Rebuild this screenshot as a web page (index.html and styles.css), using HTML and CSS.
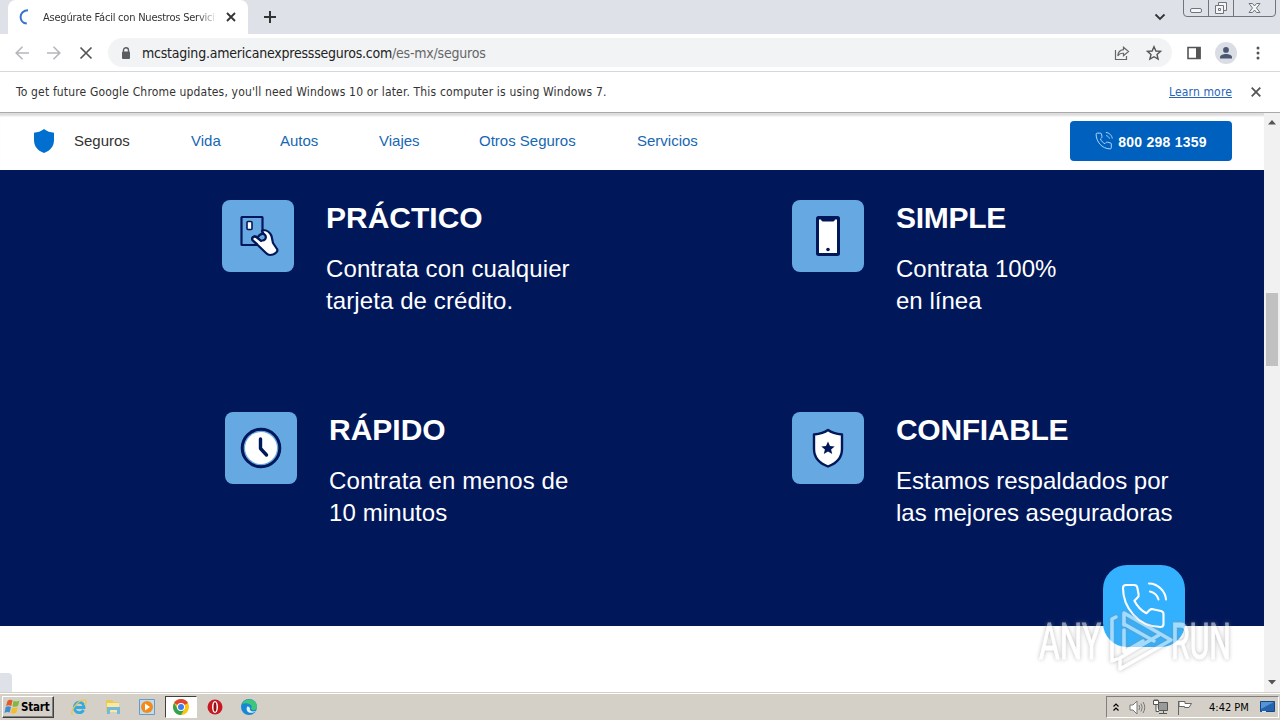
FILE: index.html
```html
<!DOCTYPE html>
<html lang="es">
    <head>
        <meta charset="UTF-8" />
        <meta name="viewport" content="width=device-width, initial-scale=1.0" />
        <title>Asegúrate Fácil con Nuestros Servicios</title>
        <link rel="stylesheet" href="styles.css">
    </head>
    <body>
        <div class="tabstrip">
            <div class="tab-edge"></div>
            <div class="tab">
                <svg class="spinner" width="16" height="16" viewBox="0 0 16 16"><path d="M9 1.2C4.5 1.2 1.6 4.2 1.6 8c0 3.6 2.6 6.2 6.2 6.6" fill="none" stroke="#3972cf" stroke-width="2" /></svg>
                <span class="tab-title">Asegúrate Fácil con Nuestros Servici</span>
                <svg width="10" height="10" viewBox="0 0 10 10"><path d="M1 1l8 8M9 1L1 9" stroke="#333" stroke-width="1.8" /></svg>
            </div>
            <svg class="new-tab" width="12" height="12" viewBox="0 0 12 12"><path d="M6 0v12M0 6h12" stroke="#333" stroke-width="2" /></svg>
            <svg class="tab-search" width="12" height="8" viewBox="0 0 12 8"><path d="M1.5 1.5L6 6l4.500-4.500" fill="none" stroke="#333" stroke-width="1.800" /></svg>
            <svg class="window-buttons" width="94" height="18" viewBox="0 0 94 18" fill="none" stroke="#70747b">
                <path d="M.5 0v13q0 3.500 3.500 3.500h85q3.500 0 3.500-3.500V0M25.500 0v16M50.500 0v16" />
                <rect x="7.500" y="8.500" width="11" height="4" rx="1.500" fill="#f5f5f7" />
                <path d="M35.500 5.500V2.500h8v8h-3" fill="#f5f5f7" />
                <path d="M32.500 5.500h8v8h-8zM35.500 8.500h2v2h-2z" fill="#f5f5f7" />
                <path d="M66 3.500h3.500l2 2.500 2-2.500H77l-3.500 4.500 3.500 4.500h-3.500l-2-2.500-2 2.500H66l3.500-4.500z" fill="#f5f5f7" />
            </svg>
        </div>

        <div class="toolbar">
            <svg width="14" height="14" viewBox="0 0 14 14"><path d="M14 7H1M7.500.8L1.200 7l6.300 6.200" fill="none" stroke="#b4b6b9" stroke-width="1.600" /></svg>
            <svg width="14" height="14" viewBox="0 0 14 14"><path d="M0 7h13M6.500.8L12.800 7l-6.300 6.200" fill="none" stroke="#b4b6b9" stroke-width="1.600" /></svg>
            <svg width="14" height="14" viewBox="0 0 14 14"><path d="M1.500 1.500l11 11M12.500 1.500l-11 11" stroke="#555" stroke-width="1.700" /></svg>
            <div class="address">
                <svg class="lock" width="10" height="12" viewBox="0 0 10 12"><path d="M2.500 5V3.200a2.500 2.500 0 015 0V5" fill="none" stroke="#5a5d61" stroke-width="1.400" /><rect x="1" y="4.500" width="8" height="7.500" rx="1" fill="#5a5d61" /></svg>
                <span class="url">mcstaging.americanexpressseguros.com<span class="path">/es-mx/seguros</span></span>
                <svg class="share" width="16" height="16" viewBox="0 0 16 16" fill="none" stroke="#666" stroke-width="1.200"><path d="M1.500 5v9.500h11V11" /><path d="M9.500 2.200L14.500 6.500l-5 4.300V8.300C7 8 5 9 3.800 11 4 7.300 6.200 5 9.500 4.700z" /></svg>
                <svg width="16" height="16" viewBox="0 0 16 16"><path d="M8 1.700l1.900 4.300 4.700.4-3.600 3.100 1.100 4.600L8 11.700l-4.100 2.400L5 9.500 1.400 6.400 6.100 6z" fill="none" stroke="#555" stroke-width="1.400" /></svg>
            </div>
            <svg class="panel" width="14" height="14" viewBox="0 0 14 14"><path d="M1 1.500h12v11H1z" fill="#fff" stroke="#555" stroke-width="1.600" /><path d="M9 1h4.500v12H9z" fill="#555" /></svg>
            <svg class="avatar" width="22" height="22" viewBox="0 0 22 22"><circle cx="11" cy="11" r="11" fill="#dadde3" /><circle cx="11" cy="7.900" r="2.900" fill="#4b5672" /><path d="M5 16.500v-1.300c0-2.200 3.500-3.200 6-3.200s6 1 6 3.200v1.300z" fill="#4b5672" /></svg>
            <svg width="4" height="14" viewBox="0 0 4 14" fill="#555"><circle cx="2" cy="2" r="1.500" /><circle cx="2" cy="7" r="1.500" /><circle cx="2" cy="12" r="1.500" /></svg>
        </div>

        <div class="infobar">
            <p>To get future Google Chrome updates, you'll need Windows 10 or later. This computer is using Windows 7.</p>
            <a href="#">Learn more</a>
            <svg width="10" height="10" viewBox="0 0 10 10"><path d="M.7.700l8.600 8.600M9.300.700L.7 9.300" stroke="#555" stroke-width="1.800" /></svg>
        </div>

        <div class="viewport">
            <div class="page">
                <header class="nav">
                    <svg class="brand" width="20" height="24" viewBox="0 0 20 24"><path d="M10 0c3 2.300 6.500 3.500 10 3.700V11c0 6.500-4 10.800-10 13C4 21.800 0 17.500 0 11V3.700C3.500 3.500 7 2.300 10 0z" fill="#006fcf" /></svg>
                    <a class="current" href="#">Seguros</a>
                    <a class="vida" href="#">Vida</a>
                    <a class="autos" href="#">Autos</a>
                    <a class="viajes" href="#">Viajes</a>
                    <a class="otros" href="#">Otros Seguros</a>
                    <a href="#">Servicios</a>
                    <button class="call" type="button">
                        <svg width="18" height="18" viewBox="0 0 48 48" fill="none" stroke="#b8dcff" stroke-width="2.500"><use href="#phone" /></svg>
                        <span>800 298 1359</span>
                    </button>
                </header>

                <section class="features">
                    <article class="feature">
                        <svg class="tile" width="72" height="72" viewBox="0 0 72 72" stroke="#00175a" stroke-width="2.200" stroke-linejoin="round" stroke-linecap="round">
                            <rect x="19.500" y="17" width="21" height="28" rx=".5" fill="#66a9e2" />
                            <rect x="25" y="21.500" width="5" height="8" rx="1" fill="#fff" stroke-width="1.600" />
                            <path d="M41 30c4 0 7 2.500 8.500 6l1.500 7 4 6c1.500 2-2 6-7 6-2 0-3-1-4-2L31 40.500c-2-2 0-5 3-4l5 3.200c3-.2 4-2.700 3-5.200L40 31z" fill="#fff" />
                            <path d="M36 37c1.500-2.500 3.500-3.500 5.500-3 3.500 1.500 3 6-1 6.500" fill="#66a9e2" />
                            <path d="M35 44l-4-3.500c-2-2 .5-5 3-3.500l5 4" fill="#fff" />
                        </svg>
                        <div>
                            <h2>PRÁCTICO</h2>
                            <p>Contrata con cualquier<br>tarjeta de crédito.</p>
                        </div>
                    </article>
                    <article class="feature">
                        <svg class="tile" width="72" height="72" viewBox="0 0 72 72">
                            <rect x="24" y="16" width="24" height="40" rx="2.500" fill="#00175a" />
                            <path d="M27 19.500h2c.3 1.200 1 2 2 2h10c1 0 1.700-.8 2-2h2v33.500H27z" fill="#fff" />
                            <circle cx="36" cy="49.500" r="1.800" fill="#00175a" />
                        </svg>
                        <div>
                            <h2 class="tight">SIMPLE</h2>
                            <p class="tight">Contrata 100%<br>en línea</p>
                        </div>
                    </article>
                    <article class="feature inset">
                        <svg class="tile" width="72" height="72" viewBox="0 0 72 72">
                            <circle cx="36" cy="36" r="18.800" fill="#66a9e2" stroke="#00175a" stroke-width="3" />
                            <circle cx="36" cy="36" r="16" fill="#fff" />
                            <path d="M35.500 27v9.500l6 6.500" fill="none" stroke="#00175a" stroke-width="3.400" stroke-linecap="round" stroke-linejoin="round" />
                        </svg>
                        <div>
                            <h2>RÁPIDO</h2>
                            <p>Contrata en menos de<br>10 minutos</p>
                        </div>
                    </article>
                    <article class="feature">
                        <svg class="tile" width="72" height="72" viewBox="0 0 72 72">
                            <path d="M36 18c4 3 9 4 14 4.500V37c0 9-6 14.500-14 17.500C28 51.500 22 46 22 37V22.500c5-.5 10-1.500 14-4.500z" fill="#fff" stroke="#00175a" stroke-width="2.400" stroke-linejoin="round" />
                            <path d="M36 29.500l2 4.500 4.700.4-3.600 3.100 1.100 4.600-4.200-2.500-4.200 2.500 1.100-4.600-3.600-3.100 4.700-.4z" fill="#00175a" />
                        </svg>
                        <div>
                            <h2 class="tight">CONFIABLE</h2>
                            <p class="tight">Estamos respaldados por<br>las mejores aseguradoras</p>
                        </div>
                    </article>
                </section>
                <div class="status-bubble"></div>
            </div>

            <div class="scrollbar">
                <svg width="8" height="5" viewBox="0 0 8 5"><path d="M0 4.500L4 0l4 4.500z" fill="#555" /></svg>
                <div class="thumb"></div>
                <svg width="8" height="5" viewBox="0 0 8 5"><path d="M0 0h8L4 4.500z" fill="#555" /></svg>
            </div>

            <a class="call-float" href="#">
                <svg width="48" height="48" viewBox="0 0 48 48" fill="none" stroke="#fff" stroke-width="2.100" stroke-linecap="round" stroke-linejoin="round">
                    <g id="phone">
                        <path d="M6 3h8c2 0 3 .8 3.300 2.500l1.300 7c.2 1.500 0 2.200-1 3l-3.200 3.200c3 6 7 10 12 12.500l3-3c1-1 2-1.300 3.500-1l8 1.800c1.700.4 2.600 1.300 2.600 3V42c0 2-1 3-3 3C18 45 3 25 3 6c0-2 1-3 3-3z" />
                        <path d="M29 1.500c9 0 16.500 8 17 16M30 9.500c4 1 7.500 4 8.500 8" />
                    </g>
                </svg>
            </a>
        </div>

        <footer class="taskbar">
            <div class="start">
                <svg width="17" height="16" viewBox="0 0 16 16"><path d="M3 2q2-2 5-.7L6.800 7Q4 5.700 1.500 7z" fill="#e25a28" /><path d="M9 1.800q3 1.400 6-.3L13.500 7q-2.500 1.400-5.500.2z" fill="#83b83e" /><path d="M1.200 8q2.500-1.300 5.300 0l-1.300 5.500Q2.500 12.500 0 14z" fill="#3f8cd0" /><path d="M7.700 8.300q3 1.300 5.600 0l-1.500 5.500q-2.500 1.300-5.500.2z" fill="#f2bd2e" /></svg>
                <span>Start</span>
            </div>
            <div class="apps">
                <div class="app">
                    <svg width="18" height="18" viewBox="0 0 18 18" fill="none"><path d="M4 9.500h10c0-7-9.500-7-9.500 0 0 6 7 6.500 9 2.500" stroke="#36a9df" stroke-width="2.800" /><path d="M3 16C-2 16 8 1 15 2c3 1-.5 5-.5 5" stroke="#ebc749" stroke-width="1.300" /></svg>
                </div>
                <div class="app">
                    <svg width="18" height="18" viewBox="0 0 18 18"><path d="M2 2h6l2 2h5v10H2z" fill="#e9c85c" /><path d="M3 5h12v9H3z" fill="#f9e8a0" /><path d="M3 9h13v7h-3v-4H6v4H3z" fill="#71b9df" /></svg>
                </div>
                <div class="app">
                    <svg width="18" height="18" viewBox="0 0 18 18"><path d="M1.500 1.500h15v15h-15z" fill="#bfdcf0" stroke="#6a9abf" /><circle cx="9" cy="9" r="6" fill="#f28b19" /><path d="M7 5.500v7l5-3.500z" fill="#fff" /></svg>
                </div>
                <div class="app active">
                    <svg width="16" height="16" viewBox="0 0 16 16"><circle cx="8" cy="8" r="8" fill="#f9c515" /><path d="M8 8L1.100 4A8 8 0 0114.900 4z" fill="#df4435" /><path d="M1.100 4A8 8 0 008 16l3.400-6H4.500z" fill="#32a350" /><circle cx="8" cy="8" r="4" fill="#fff" /><circle cx="8" cy="8" r="3" fill="#3f7eea" /></svg>
                </div>
                <div class="app">
                    <svg width="16" height="16" viewBox="0 0 16 16"><circle cx="8" cy="8" r="7.500" fill="#c81920" /><ellipse cx="8" cy="8" rx="3" ry="6" fill="#fff" /><ellipse cx="8" cy="8" rx="1.500" ry="4.800" fill="#971019" /></svg>
                </div>
                <div class="app">
                    <svg width="16" height="16" viewBox="0 0 16 16"><circle cx="8" cy="8" r="8" fill="#1688d3" /><path d="M1 5C4-2 16-1 16 8c0 4-6 4-6 1 3-3-5-6-9-4z" fill="#3cc77b" /><path d="M6 8c-2 5 4 8 9 4-4 1-7 0-6-3-1-1-2-2-3-1z" fill="#e5eff2" /></svg>
                </div>
            </div>
            <div class="tray">
                <svg width="6" height="8" viewBox="0 0 6 8"><path d="M.5 3.500L3 1l2.500 2.500M.5 7.500L3 5l2.500 2.500" fill="none" stroke="#000" stroke-width="1.200" /></svg>
                <svg class="sound" width="17" height="15" viewBox="0 0 17 15" fill="none" stroke="#777"><path d="M1 5h3l4-4v13l-4-4H1z" fill="#fff" /><path d="M10 5q1.500 2.500 0 5M12 3.500q2.500 4 0 8M14 2q3.500 5.500 0 11" /></svg>
                <svg class="network" width="16" height="16" viewBox="0 0 16 16"><path d="M5.500 3.500h9v8h-9z" fill="#999" stroke="#555" /><path d="M6 14.500h8M10.500 12v2" stroke="#555" /><path d="M.5 1.500h5v4h-5zM2 0v2M4 0v2M3 5.500v7h3" fill="#fff" stroke="#555" /></svg>
                <svg class="flag" width="16" height="15" viewBox="0 0 16 15"><path d="M1.500 15V1" stroke="#666" /><path d="M2 1.500h6v2h6.500l-2.500 4H7.500v-1H2z" fill="#fff" stroke="#666" /></svg>
                <time>4:42 PM</time>
                <svg class="show-desktop" width="15" height="12" viewBox="0 0 15 12"><path d="M.5.500h14v10H.5z" fill="#2464ae" stroke="#174780" /><path d="M1 1h13L1 8z" fill="#5594d5" /><path d="M2 10.500h4" stroke="#d7e9f8" /></svg>
            </div>
        </footer>

        <svg class="watermark" width="204" height="72" viewBox="0 0 204 72">
            <text x="5" y="55" textLength="62" lengthAdjust="spacingAndGlyphs">ANY</text>
            <g fill="none" stroke="#fff" stroke-width="3.500" stroke-linejoin="round" stroke-linecap="round">
                <path d="M83 55l-5 2V15l4-2M90 21V9l47 27-51 29V54l39-23" />
                <path d="M90 20l30 17M90 26v22l19-11" />
            </g>
            <text x="137" y="55" textLength="60" lengthAdjust="spacingAndGlyphs">RUN</text>
        </svg>
    </body>
</html>
```
FILE: styles.css
```css
* {
    margin: 0;
    padding: 0;
    box-sizing: border-box;
}
body {
    position: relative;
    display: flex;
    flex-direction: column;
    width: 1280px;
    height: 720px;
    overflow: hidden;
    background: #fff;
    font-family: 'DejaVu Sans Condensed', 'DejaVu Sans', sans-serif;
    font-size: 12px;
    color: #333;
}
svg {
    display: block;
    flex: none;
}

/* browser window */
.tabstrip {
    display: flex;
    height: 34px;
    flex: none;
    background: #dee1e8;
}
.tab-edge {
    width: 8px;
    border-bottom-right-radius: 8px;
}
.tab {
    display: flex;
    align-items: center;
    width: 240px;
    padding: 0 11px;
    background: #fff;
    border-radius: 8px 8px 0 0;
}
.tab-title {
    width: 175px;
    margin: 0 8px;
    white-space: nowrap;
    font-size: 11px;
    letter-spacing: -0.22px;
    -webkit-mask-image: linear-gradient(90deg, #000 88%, transparent);
    mask-image: linear-gradient(90deg, #000 88%, transparent);
}
.new-tab {
    margin: 11px 0 0 16px;
}
.tab-search {
    margin: 13px 17px 0 auto;
}
.window-buttons {
    margin-right: 3px;
}
.toolbar {
    display: flex;
    align-items: center;
    height: 38px;
    flex: none;
    gap: 18px;
    padding: 0 19px 0 15px;
    border-bottom: 1px solid #d6d8dc;
}
.address {
    display: flex;
    align-items: center;
    width: 1064px;
    height: 29px;
    margin-left: -3px;
    padding: 0 10px 0 13px;
    background: #f1f3f4;
    border-radius: 15px;
}
.url {
    margin-left: 11px;
    font-size: 14px;
    letter-spacing: -0.22px;
    color: #222;
}
.url .path {
    color: #666;
}
.share {
    margin: 0 16px 0 auto;
}
.panel {
    margin-left: -3px;
}
.avatar {
    margin: 0 1px 0 -4px;
}
.infobar {
    display: flex;
    align-items: center;
    height: 41px;
    flex: none;
    padding: 0 19px 0 16px;
    border-bottom: 1px solid #aaa;
}
.infobar p {
    letter-spacing: 0.165px;
}
.infobar a {
    margin: 0 19px 0 auto;
    letter-spacing: 0.15px;
    color: #2864b8;
}

/* site */
.viewport {
    position: relative;
    display: flex;
    height: 579px;
    flex: none;
}
.page {
    display: flex;
    flex-direction: column;
    width: 1264px;
    font-family: 'Liberation Sans', Arial, sans-serif;
}
.nav {
    display: flex;
    align-items: center;
    height: 57px;
    flex: none;
    padding: 0 32px 2px 34px;
    font-size: 15px;
    box-shadow: inset 0 4px 2px -1px #ddd;
}
.nav a {
    color: #1767b3;
    text-decoration: none;
}
.nav .current {
    width: 117px;
    margin-left: 20px;
    color: #333;
}
.nav .vida {
    width: 89px;
}
.nav .autos {
    width: 99px;
}
.nav .viajes {
    width: 100px;
}
.nav .otros {
    width: 158px;
}
.call {
    display: flex;
    align-items: center;
    justify-content: center;
    width: 162px;
    height: 40px;
    margin-left: auto;
    gap: 5px;
    border: 0;
    border-radius: 4px;
    background: #0060bd;
    color: #fff;
    font: bold 14px 'Liberation Sans', Arial, sans-serif;
    letter-spacing: 0.25px;
}
.call span {
    padding-top: 2px;
}
.features {
    display: grid;
    grid-template-columns: 570px 1fr;
    grid-template-rows: 212px 212px;
    height: 456px;
    flex: none;
    padding: 30px 0 0 222px;
    background: #00175a;
    color: #fff;
}
.feature {
    display: flex;
    gap: 32px;
}
.inset {
    padding-left: 3px;
}
.tile {
    background: #66a9e2;
    border-radius: 8px;
}
.feature h2 {
    margin-bottom: 17px;
    font-size: 30px;
    line-height: 36px;
}
.feature p {
    font-size: 24px;
    line-height: 32px;
    letter-spacing: 0.1px;
}
.feature h2.tight {
    letter-spacing: -0.3px;
}
.feature p.tight {
    letter-spacing: 0.02px;
}
.status-bubble {
    width: 12px;
    height: 19px;
    margin-top: auto;
    background: #dee1e8;
    border-top-right-radius: 4px;
}
.scrollbar {
    display: flex;
    flex-direction: column;
    align-items: center;
    width: 16px;
    padding: 7px 0;
    background: #f1f1f1;
}
.thumb {
    width: 12px;
    height: 73px;
    margin: 168px 0 auto;
    background: #c1c1c1;
}
.call-float {
    position: absolute;
    top: 452px;
    left: 1103px;
    display: grid;
    place-items: center;
    width: 82px;
    height: 82px;
    border-radius: 24px;
    background: #33b1ff;
}

/* desktop */
.taskbar {
    display: flex;
    align-items: center;
    height: 28px;
    flex: none;
    padding: 1px 1px 0 2px;
    background: #d4d0c8;
    border-top: 1px solid #d4d0c8;
    box-shadow: inset 0 1px #fff;
    color: #000;
}
.start {
    display: flex;
    align-items: center;
    width: 52px;
    height: 22px;
    padding-left: 1px;
    border: 1px solid;
    border-color: #fff #404040 #404040 #fff;
    box-shadow: inset -1px -1px #808080;
    font-size: 11.5px;
    font-weight: bold;
    letter-spacing: -0.2px;
}
.apps {
    display: flex;
    margin-left: 9px;
    gap: 2px;
}
.app {
    display: grid;
    place-items: center;
    width: 32px;
    height: 22px;
}
.active {
    background: #fff;
    border: 1px solid;
    border-color: #404040 #fff #fff #404040;
}
.tray {
    display: flex;
    align-items: center;
    width: 173px;
    height: 22px;
    margin-left: auto;
    padding-left: 6px;
    border: 1px solid;
    border-color: #808080 #fff #fff #808080;
    font-size: 11px;
}
.sound {
    margin-left: 10px;
}
.network {
    margin-left: 7px;
}
.flag {
    margin-left: 8px;
}
time {
    width: 42px;
    margin-left: 16px;
    white-space: nowrap;
}
.show-desktop {
    margin-left: 9px;
}

/* translucent mark over the page corner */
.watermark {
    position: absolute;
    top: 604px;
    left: 1034px;
    opacity: 0.55;
    filter: drop-shadow(0 0 2px #888);
}
.watermark text {
    font-family: Roboto, sans-serif;
    font-size: 50px;
    fill: #fff;
    stroke: #fff;
}
```
